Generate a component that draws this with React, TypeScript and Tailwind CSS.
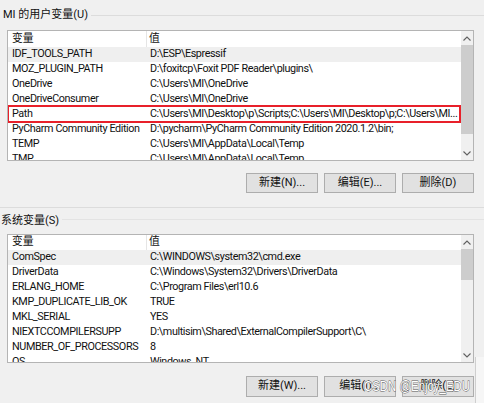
import React from "react";

type Row = [string, string];

const userVars: Row[] = [
  ["IDF_TOOLS_PATH", "D:\\ESP\\Espressif"],
  ["MOZ_PLUGIN_PATH", "D:\\foxitcp\\Foxit PDF Reader\\plugins\\"],
  ["OneDrive", "C:\\Users\\MI\\OneDrive"],
  ["OneDriveConsumer", "C:\\Users\\MI\\OneDrive"],
  ["Path", "C:\\Users\\MI\\Desktop\\p\\Scripts;C:\\Users\\MI\\Desktop\\p;C:\\Users\\MI..."],
  ["PyCharm Community Edition", "D:\\pycharm\\PyCharm Community Edition 2020.1.2\\bin;"],
  ["TEMP", "C:\\Users\\MI\\AppData\\Local\\Temp"],
  ["TMP", "C:\\Users\\MI\\AppData\\Local\\Temp"],
];

const sysVars: Row[] = [
  ["ComSpec", "C:\\WINDOWS\\system32\\cmd.exe"],
  ["DriverData", "C:\\Windows\\System32\\Drivers\\DriverData"],
  ["ERLANG_HOME", "C:\\Program Files\\erl10.6"],
  ["KMP_DUPLICATE_LIB_OK", "TRUE"],
  ["MKL_SERIAL", "YES"],
  ["NIEXTCCOMPILERSUPP", "D:\\multisim\\Shared\\ExternalCompilerSupport\\C\\"],
  ["NUMBER_OF_PROCESSORS", "8"],
  ["OS", "Windows_NT"],
];

const font = "font-['Roboto','Noto_Sans_CJK_SC',sans-serif]";

function Chevron({ up }: { up?: boolean }) {
  return (
    <svg width="8" height="5" viewBox="0 0 8 5" className="block">
      <path
        d={up ? "M0.5 4.5 L4 1 L7.5 4.5" : "M0.5 0.5 L4 4 L7.5 0.5"}
        fill="none"
        stroke="#606060"
        strokeWidth="1.1"
      />
    </svg>
  );
}

function VarList({
  rows,
  height,
  headerH,
  thumbH,
  marked,
}: {
  rows: Row[];
  height: number;
  headerH: string;
  thumbH: string;
  marked?: number;
}) {
  return (
    <div
      className="ml-[7px] w-[467px] flex border border-[#b4b4b4] bg-white overflow-hidden"
      style={{ height }}
    >
      <div className="w-[453px] flex flex-col text-[10.8px] text-[#111]">
        <div className={`${headerH} flex shrink-0`}>
          <div className="w-[139px] pl-[4px] flex items-center border-r border-[#e5e5e5]">变量</div>
          <div className="pl-[2px] flex items-center">值</div>
        </div>
        {rows.map(([name, value], i) => (
          <div
            key={name}
            className={`relative h-[15px] shrink-0 flex items-center whitespace-nowrap ${
              i === 0 ? "bg-[#efefef]" : ""
            }`}
          >
            <div className="w-[139px] shrink-0 pl-[4px] tracking-[-0.4px]">{name}</div>
            <div className="pl-[3px] tracking-[-0.42px]">{value}</div>
            {i === marked && (
              <div className="absolute left-[-1px] right-0 top-[-2px] bottom-[-1px] border-2 border-[#e8202a]" />
            )}
          </div>
        ))}
      </div>
      <div className="w-[12px] flex flex-col bg-[#f0f0f0]">
        <div className="h-[14px] flex items-center justify-center">
          <Chevron up />
        </div>
        <div className="flex-1">
          <div className={`${thumbH} bg-[#cdcdcd]`} />
        </div>
        <div className="h-[13px] flex items-center justify-center">
          <Chevron />
        </div>
      </div>
    </div>
  );
}

function Buttons({ labels, h }: { labels: string[]; h: string }) {
  return (
    <div className="flex justify-end gap-[6px] pr-[10px]">
      {labels.map((l) => (
        <div
          key={l}
          className={`w-[72px] ${h} flex items-center justify-center bg-[#e1e1e1] border border-[#adadad] text-[11px] text-[#111]`}
        >
          {l}
        </div>
      ))}
    </div>
  );
}

function GroupTitle({ text, h }: { text: string; h: string }) {
  return (
    <div className={`${h} flex items-center pl-[3px]`}>
      <span className="text-[11px] text-[#111]">{text}</span>
      <div className="flex-1 h-px bg-[#dcdcdc] ml-[3px] mt-[1px]" />
    </div>
  );
}

export default function App() {
  return (
    <div className={`${font} relative w-[484px] h-[403px] bg-[#f0f0f0] overflow-hidden`}>
      <GroupTitle text="MI 的用户变量(U)" h="h-[30px]" />
      <VarList rows={userVars} height={131} headerH="h-[16px]" thumbH="h-[89px]" marked={4} />
      <div className="mt-[12px]">
        <Buttons labels={["新建(N)...", "编辑(E)...", "删除(D)"]} h="h-[20px]" />
      </div>
      <div className="mt-[14px] h-px bg-[#dcdcdc]" />
      <div className="h-[26px] flex items-center">
        <span className="pl-[1px] text-[11px] text-[#111]">系统变量(S)</span>
        <div className="flex-1 h-px bg-[#e3e3e3] ml-[3px] mb-[4px]" />
      </div>
      <VarList rows={sysVars} height={129} headerH="h-[15px]" thumbH="h-[31px]" />
      <div className="mt-[13px]">
        <Buttons labels={["新建(W)...", "编辑(I)...", "删除(L)"]} h="h-[21px]" />
      </div>

      {/* edge of the window behind */}
      <div className="absolute left-[475px] top-[357px] bottom-0 right-0 border-l border-[#cfcfcf] bg-[#f6f6f6]" />

      {/* watermark */}
      <div className="absolute left-[364px] top-[377px] origin-left scale-x-[0.76] text-[15px] leading-[18px] text-white [-webkit-text-stroke:0.9px_#5a5a5a] [paint-order:stroke_fill] font-['Liberation_Sans',sans-serif] whitespace-nowrap">
        CSDN @Enjoy_EDU
      </div>
    </div>
  );
}
